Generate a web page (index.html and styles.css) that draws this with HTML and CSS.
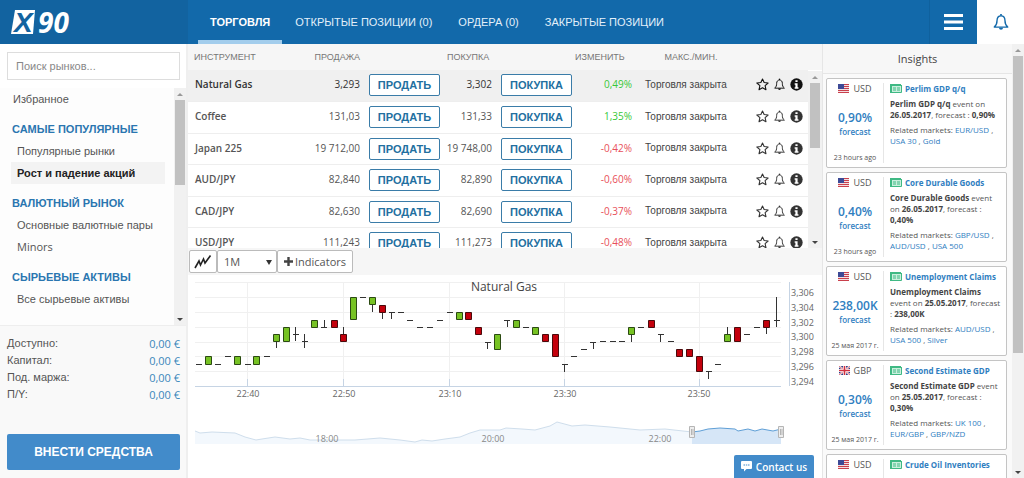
FILE: index.html
```html
<!DOCTYPE html>
<html lang="ru">
<head>
<meta charset="utf-8">
<meta name="viewport" content="width=device-width, initial-scale=1">
<title>X90</title>
<link rel="stylesheet" href="styles.css">
</head>
<body>
<svg class="defs" width="0" height="0" aria-hidden="true">
  <symbol id="star" viewBox="0 0 12 12"><path d="M6 .9l1.5 3.3 3.7.4-2.8 2.5.8 3.7L6 9l-3.2 1.8.8-3.7L.8 4.6l3.7-.4z" fill="none" stroke="currentColor" stroke-linejoin="round"/></symbol>
  <symbol id="bell" viewBox="0 0 14 16"><path d="M1 12.5c2-1.600 2.500-3.200 2.500-6C3.500 4 5 2.500 7 2.500S10.500 4 10.500 6.500c0 2.800.5 4.400 2.500 6z" fill="none" stroke="currentColor" stroke-width="1.200" stroke-linejoin="round"/><path d="M7 .8v1.700" stroke="currentColor" stroke-width="1.500"/><path d="M5.200 13h3.600a1.800 1.800 0 0 1-3.600 0z" fill="currentColor"/></symbol>
  <symbol id="info" viewBox="0 0 12 12"><circle cx="6" cy="6" r="5.700" fill="currentColor"/><path d="M5 2h2v1.700H5zM4.300 4.900H7v3.700h.8V10H4.300V8.600H5V6.200h-.7z" fill="#fff"/></symbol>
  <symbol id="us" viewBox="0 0 11 9"><path fill="#f3dfe2" d="M0 0h11v9H0z"/><path d="M0 .5h11M0 2.500h11M0 4.500h11M0 6.500h11M0 8.500h11" stroke="#c9404c"/><path fill="#3d4a96" d="M0 0h6v5H0z"/></symbol>
  <symbol id="gb" viewBox="0 0 11 9"><path fill="#2f3f86" d="M0 0h11v9H0z"/><path d="M0 0l11 9M11 0L0 9" stroke="#fff" stroke-width="2"/><path d="M0 0l11 9M11 0L0 9" stroke="#d03040" stroke-width=".7"/><path d="M5.500 0v9M0 4.500h11" stroke="#fff" stroke-width="3"/><path d="M5.500 0v9M0 4.500h11" stroke="#d03040" stroke-width="1.600"/></symbol>
  <symbol id="news" viewBox="0 0 12 9"><path fill="#3fb984" d="M0 0h11v2H2v7H0z"/><path fill="#c9efdd" d="M2 2h9v6H2z"/><path d="M2 8.500h9.500V1M3 4h3M3 6h3M7 4h3M7 6h3" stroke="#3fb984" fill="none"/></symbol>
</svg>
<div class="app">
  <header class="top">
    <a class="logo" href="#" aria-label="X90">
      <svg width="62" height="26" viewBox="0 0 62 26">
        <path d="M4 1h20l-2 24H0z" fill="#fff"/>
        <text class="logo-x" x="3" y="23">X</text>
        <text class="logo-n" x="27" y="24">90</text>
      </svg>
    </a>
    <nav class="tabs">
      <a class="tab active" href="#">ТОРГОВЛЯ</a>
      <a class="tab" href="#">ОТКРЫТЫЕ ПОЗИЦИИ (0)</a>
      <a class="tab" href="#">ОРДЕРА (0)</a>
      <a class="tab" href="#">ЗАКРЫТЫЕ ПОЗИЦИИ</a>
    </nav>
    <button class="menu" type="button" aria-label="Меню"><svg width="19" height="16" viewBox="0 0 19 16"><path d="M0 1.500h19M0 8h19M0 14.500h19" stroke="#fff" stroke-width="3"/></svg></button>
    <button class="alerts" type="button" aria-label="Уведомления"><svg width="16" height="18"><use href="#bell"/></svg></button>
  </header>
  <div class="body">
    <aside class="side">
      <input class="search" type="text" placeholder="Поиск рынков..." aria-label="Поиск рынков">
      <div class="list-wrap">
        <nav class="list">
          <a class="fav" href="#">Избранное</a>
          <h2>САМЫЕ ПОПУЛЯРНЫЕ</h2>
          <a href="#">Популярные рынки</a>
          <a class="current" href="#">Рост и падение акций</a>
          <h2>ВАЛЮТНЫЙ РЫНОК</h2>
          <a href="#">Основные валютные пары</a>
          <a class="latin" href="#">Minors</a>
          <h2>СЫРЬЕВЫЕ АКТИВЫ</h2>
          <a href="#">Все сырьевые активы</a>
        </nav>
        <div class="scroll"><i class="up"></i><i class="thumb side-thumb"></i><i class="down"></i></div>
      </div>
      <div class="account">
        <dl>
          <dt>Доступно:</dt><dd>0,00 €</dd>
          <dt>Капитал:</dt><dd>0,00 €</dd>
          <dt>Под. маржа:</dt><dd>0,00 €</dd>
          <dt>П/Y:</dt><dd>0,00 €</dd>
        </dl>
        <button class="deposit" type="button">ВНЕСТИ СРЕДСТВА</button>
      </div>
    </aside>
    <main class="main">
      <section class="quotes">
        <table>
          <colgroup><col class="c-name"><col class="c-sell"><col class="c-btn"><col class="c-buy"><col class="c-btn"><col class="c-chg"><col class="c-state"><col class="c-icons"></colgroup>
          <thead><tr><th class="left">ИНСТРУМЕНТ</th><th class="right">ПРОДАЖА</th><th></th><th class="left">ПОКУПКА</th><th></th><th class="chg-h">ИЗМЕНИТЬ</th><th class="center">МАКС./МИН.</th><th></th></tr></thead>
          <tbody>
            <tr class="sel"><td class="name">Natural Gas</td><td class="num">3,293</td><td><button class="trade" type="button">ПРОДАТЬ</button></td><td class="num">3,302</td><td><button class="trade" type="button">ПОКУПКА</button></td><td class="num up-v">0,49%</td><td class="state">Торговля закрыта</td><td><div class="icons"><svg><use href="#star"/></svg><svg><use href="#bell"/></svg><svg><use href="#info"/></svg></div></td></tr>
            <tr><td class="name">Coffee</td><td class="num">131,03</td><td><button class="trade" type="button">ПРОДАТЬ</button></td><td class="num">131,33</td><td><button class="trade" type="button">ПОКУПКА</button></td><td class="num up-v">1,35%</td><td class="state">Торговля закрыта</td><td><div class="icons"><svg><use href="#star"/></svg><svg><use href="#bell"/></svg><svg><use href="#info"/></svg></div></td></tr>
            <tr><td class="name">Japan 225</td><td class="num">19 712,00</td><td><button class="trade" type="button">ПРОДАТЬ</button></td><td class="num">19 748,00</td><td><button class="trade" type="button">ПОКУПКА</button></td><td class="num down-v">-0,42%</td><td class="state">Торговля закрыта</td><td><div class="icons"><svg><use href="#star"/></svg><svg><use href="#bell"/></svg><svg><use href="#info"/></svg></div></td></tr>
            <tr><td class="name">AUD/JPY</td><td class="num">82,840</td><td><button class="trade" type="button">ПРОДАТЬ</button></td><td class="num">82,890</td><td><button class="trade" type="button">ПОКУПКА</button></td><td class="num down-v">-0,60%</td><td class="state">Торговля закрыта</td><td><div class="icons"><svg><use href="#star"/></svg><svg><use href="#bell"/></svg><svg><use href="#info"/></svg></div></td></tr>
            <tr><td class="name">CAD/JPY</td><td class="num">82,630</td><td><button class="trade" type="button">ПРОДАТЬ</button></td><td class="num">82,690</td><td><button class="trade" type="button">ПОКУПКА</button></td><td class="num down-v">-0,37%</td><td class="state">Торговля закрыта</td><td><div class="icons"><svg><use href="#star"/></svg><svg><use href="#bell"/></svg><svg><use href="#info"/></svg></div></td></tr>
            <tr><td class="name">USD/JPY</td><td class="num">111,243</td><td><button class="trade" type="button">ПРОДАТЬ</button></td><td class="num">111,273</td><td><button class="trade" type="button">ПОКУПКА</button></td><td class="num down-v">-0,48%</td><td class="state">Торговля закрыта</td><td><div class="icons"><svg><use href="#star"/></svg><svg><use href="#bell"/></svg><svg><use href="#info"/></svg></div></td></tr>
          </tbody>
        </table>
        <div class="scroll"><i class="up"></i><i class="thumb table-thumb"></i><i class="down"></i></div>
      </section>
      <div class="toolbar">
        <button class="tool type" type="button" aria-label="Тип графика"><svg width="18" height="16" viewBox="0 0 18 16"><path d="M1 14l4-7 1.500 4 3-6 1.500 4 5.500-7.500" fill="none" stroke="#222" stroke-width="1.600"/></svg></button>
        <div class="tool period"><select aria-label="Период"><option>1M</option></select></div>
        <button class="tool" type="button"><svg width="9" height="9" viewBox="0 0 9 9"><path d="M4.500 0v9M0 4.500h9" stroke="#444" stroke-width="2.400"/></svg>Indicators</button>
      </div>
      <section class="chart">
        <svg viewBox="188 275 634 203" preserveAspectRatio="xMidYMin meet" role="img" aria-label="Natural Gas">
          <path class="grid" d="M195 282.500H781M195 297.500H781M195 312.500H781M195 327.500H781M195 342.500H781M195 356.500H781M195 371.500H781M247.500 282V386M343.500 282V386M449.500 282V386M564.500 282V386M699.500 282V386"/>
          <path class="axis" d="M195 386.500H781M789.500 282V386M247.500 379v7M343.500 379v7M449.500 379v7M564.500 379v7M699.500 379v7"/>
          <path class="wick" d="M276.500 341v7M295.500 327v14M304.500 334v14M324.500 320v7M343.500 327v7M372.500 304v8M382.500 312v7M391.500 312v7M487.500 342v7M507.500 320v7M564.500 364v8M593.500 342v7M631.500 334v8M660.500 334v8M708.500 372v7M727.500 327v7M766.500 327v7M776.500 297v30"/>
          <path class="wick" d="M196 364.500h6M215 364.500h6M225 356.500h6M245 364.500h6M264 356.500h6M293 334.500h6M302 341.500h6M321 327.500h6M360 297.500h6M389 312.500h6M398 312.500h6M407 320.500h6M417 327.500h6M427 327.500h6M437 320.500h6M447 312.500h6M485 342.500h6M504 320.500h6M523 327.500h6M562 364.500h6M571 356.500h6M581 349.500h6M590 342.500h6M600 341.500h6M610 341.500h6M619 341.500h6M638 327.500h6M658 334.500h6M668 341.500h6M706 371.500h6M715 364.500h6M744 334.500h6M754 327.500h6M774 320.500h6"/>
          <path class="rise" d="M205.500 356.500h6v8h-6zM234.500 356.500h6v8h-6zM253.500 356.500h6v8h-6zM273.500 334.500h6v7h-6zM283.500 327.500h6v14h-6zM311.500 320.500h6v7h-6zM350.500 297.500h6v22h-6zM369.500 297.500h6v7h-6zM456.500 312.500h6v7h-6zM494.500 334.500h6v15h-6zM513.500 320.500h6v7h-6zM532.500 327.500h6v7h-6zM628.500 327.500h6v7h-6zM724.500 334.500h6v7h-6z"/>
          <path class="fall" d="M331.500 320.500h6v7h-6zM340.500 334.500h6v7h-6zM379.500 305.500h6v7h-6zM465.500 312.500h6v7h-6zM475.500 327.500h6v7h-6zM542.500 334.500h6v7h-6zM552.500 334.500h6v22h-6zM648.500 320.500h6v7h-6zM676.500 349.500h6v7h-6zM686.500 349.500h6v7h-6zM696.500 356.500h6v15h-6zM734.500 327.500h6v14h-6zM763.500 320.500h6v7h-6z"/>
          <text class="title" x="504" y="291">Natural Gas</text>
          <g class="label"><text x="791" y="296">3,306</text><text x="791" y="311">3,304</text><text x="791" y="326">3,302</text><text x="791" y="340">3,300</text><text x="791" y="355">3,298</text><text x="791" y="370">3,296</text><text x="791" y="385">3,294</text></g>
          <g class="label mid"><text x="248" y="397">22:40</text><text x="344" y="397">22:50</text><text x="450" y="397">23:10</text><text x="565" y="397">23:30</text><text x="699" y="397">23:50</text></g>
          <path class="nav-area" d="M195 431L200 433 212 432 235 433 245 437 256 440 262 439 275 437 290 439 300 438 310 440 355 440 380 438 400 440 415 442 422 440 432 441 445 439 460 437 470 433 480 430 500 430 506 428 522 429 535 430 550 426 557 422 572 426 585 425 610 427 640 430 665 429 692 432V444H195z"/>
          <path class="nav-line" d="M195 431L200 433 212 432 235 433 245 437 256 440 262 439 275 437 290 439 300 438 310 440 355 440 380 438 400 440 415 442 422 440 432 441 445 439 460 437 470 433 480 430 500 430 506 428 522 429 535 430 550 426 557 422 572 426 585 425 610 427 640 430 665 429 692 432"/>
          <path class="win-area" d="M692 432L700 431 708 429 720 428 735 429 738 431 748 429 755 431 762 429 773 431 781 429V444H692z"/>
          <path class="win-line" d="M692 432L700 431 708 429 720 428 735 429 738 431 748 429 755 431 762 429 773 431 781 429"/>
          <path class="grip" d="M689.500 426.500h5v11h-5zM778.500 426.500h5v11h-5zM691.500 429v6M693 429v6M780.500 429v6M782 429v6"/>
          <g class="label mid soft"><text x="327" y="442">18:00</text><text x="493" y="442">20:00</text><text x="660" y="442">22:00</text></g>
        </svg>
        <button class="contact" type="button"><svg width="11" height="11" viewBox="0 0 11 11"><path d="M1 0h9q1 0 1 1v6q0 1-1 1H5.500L3 10.500V8H1Q0 8 0 7V1q0-1 1-1z" fill="#fff"/><path d="M2.500 4h1.500M4.800 4h1.500M7 4h1.500" stroke="#428bca" stroke-width="1.200"/></svg>Contact us</button>
      </section>
    </main>
    <aside class="insights">
      <div class="feed">
        <h2>Insights</h2>
        <article class="card"><div class="fig"><p class="cur"><svg width="11" height="9"><use href="#us"/></svg>USD</p><p class="val">0,90%</p><p class="fc">forecast</p><time>23 hours ago</time></div><div class="info"><h3><svg width="12" height="9"><use href="#news"/></svg>Perlim GDP q/q</h3><p><b>Perlim GDP q/q</b> event on <b>26.05.2017</b>, forecast : <b>0,90%</b></p><p>Related markets: <a href="#">EUR/USD</a> , <a href="#">USA 30</a> , <a href="#">Gold</a></p></div></article>
        <article class="card"><div class="fig"><p class="cur"><svg width="11" height="9"><use href="#us"/></svg>USD</p><p class="val">0,40%</p><p class="fc">forecast</p><time>23 hours ago</time></div><div class="info"><h3><svg width="12" height="9"><use href="#news"/></svg>Core Durable Goods</h3><p><b>Core Durable Goods</b> event on <b>26.05.2017</b>, forecast : <b>0,40%</b></p><p>Related markets: <a href="#">GBP/USD</a> , <a href="#">AUD/USD</a> , <a href="#">USA 500</a></p></div></article>
        <article class="card"><div class="fig"><p class="cur"><svg width="11" height="9"><use href="#us"/></svg>USD</p><p class="val">238,00K</p><p class="fc">forecast</p><time>25 мая 2017 г.</time></div><div class="info"><h3><svg width="12" height="9"><use href="#news"/></svg>Unemployment Claims</h3><p><b>Unemployment Claims</b> event on <b>25.05.2017</b>, forecast : <b>238,00K</b></p><p>Related markets: <a href="#">AUD/USD</a> , <a href="#">USA 500</a> , <a href="#">Silver</a></p></div></article>
        <article class="card"><div class="fig"><p class="cur"><svg width="11" height="9"><use href="#gb"/></svg>GBP</p><p class="val">0,30%</p><p class="fc">forecast</p><time>25 мая 2017 г.</time></div><div class="info"><h3><svg width="12" height="9"><use href="#news"/></svg>Second Estimate GDP</h3><p><b>Second Estimate GDP</b> event on <b>25.05.2017</b>, forecast : <b>0,30%</b></p><p>Related markets: <a href="#">UK 100</a> , <a href="#">EUR/GBP</a> , <a href="#">GBP/NZD</a></p></div></article>
        <article class="card"><div class="fig"><p class="cur"><svg width="11" height="9"><use href="#us"/></svg>USD</p></div><div class="info"><h3><svg width="12" height="9"><use href="#news"/></svg>Crude Oil Inventories</h3></div></article>
      </div>
      <div class="scroll"><i class="up"></i><i class="thumb feed-thumb"></i><i class="down"></i></div>
    </aside>
  </div>
</div>
</body>
</html>
```
FILE: styles.css
```css
* { box-sizing: border-box; }
body, h2, h3, p, dl, dd { margin: 0; }
body { font: 11px "Liberation Sans", sans-serif; color: #555; background: #fff; }
a { color: inherit; text-decoration: none; }
button { font: inherit; margin: 0; padding: 0; cursor: pointer; }
.defs { position: absolute; }
.app { display: flex; flex-direction: column; height: 100vh; overflow: hidden; }

.top { display: flex; flex: none; height: 44px; background: #1269aa; color: #e4f0fa; }
.logo { display: flex; align-items: center; width: 188px; padding-left: 11px; background: #1263a0; }
.logo svg { overflow: visible; }
.logo-x { font: italic bold 28px "Liberation Sans", sans-serif; fill: #1263a0; }
.logo-n { font: italic bold 28px "Open Sans", sans-serif; fill: #fff; }
.tabs { display: flex; flex: 1; padding-left: 10px; }
.tab { display: flex; align-items: center; padding: 4px 13px 0; border-bottom: 4px solid transparent; white-space: nowrap; }
.tab.active { padding: 4px 12px 0; font-weight: bold; color: #fff; border-color: #a3cdec; }
.menu, .alerts { display: flex; align-items: center; justify-content: center; border: 0; background: none; }
.menu { width: 48px; border-left: 1px solid #0f619e; }
.alerts { width: 47px; background: #fff; color: #1269aa; }

.body { display: flex; flex: 1; min-height: 0; }
.scroll { display: flex; flex-direction: column; align-items: center; flex: none; width: 12px; background: #f1f1f1; }
.up, .down { border: 3px solid transparent; }
.up { margin: 2px 0 4px; border-bottom-color: #999; }
.down { margin: auto 0 1px; border-top-color: #444; }
.thumb { width: 10px; background: #c1c1c1; }
.side-thumb { height: 85px; }
.table-thumb { height: 65px; }
.feed-thumb { height: 297px; }

.side { display: flex; flex-direction: column; flex: none; width: 188px; border-right: 2px solid #efefef; }
.search { margin: 8px 6px 8px 7px; height: 28px; padding: 0 8px; border: 1px solid #ddd; font: inherit; color: #777; }
.search::placeholder { color: #888; opacity: 1; }
.list-wrap { display: flex; flex: 1; min-height: 0; background: #fdfdfd; border-bottom: 1px solid #eee; }
.list { flex: 1; padding-left: 11px; overflow: hidden; }
.list a, .list h2 { display: block; height: 22px; line-height: 22px; white-space: nowrap; }
.list a { margin-right: 9px; padding-left: 6px; }
.list .fav { padding-left: 2px; }
.list h2 { margin-top: 8px; padding-left: 1px; font-size: 11px; font-weight: bold; color: #2a76b0; }
.list .current { background: #f3f3f3; font-weight: bold; color: #222; }
.latin { font-family: "Open Sans", sans-serif; }
.account { padding: 9px 6px 8px 7px; background: #f9f9f9; }
dl { display: grid; grid-template-columns: 1fr auto; line-height: 17px; }
dd { color: #3a87bb; font-family: "Open Sans", sans-serif; }
.deposit { display: block; width: 100%; height: 36px; margin-top: 31px; border: 0; border-radius: 2px; background: #428bca; color: #fff; font-size: 12px; font-weight: bold; }

.main { display: flex; flex-direction: column; flex: 1; min-width: 0; }
.quotes { display: flex; height: 204px; flex: none; overflow: hidden; background: linear-gradient(#f6f6f6 26px, #fff 26px); }
.quotes > .scroll { width: 14px; margin-top: 27px; }
table { flex: 1; width: 100%; table-layout: fixed; border-collapse: collapse; }
.c-name { width: 92px; } .c-sell { width: 80px; } .c-btn { width: 81px; } .c-buy { width: 51px; }
.c-chg { width: 59px; } .c-state { width: 118px; } .c-icons { width: 58px; }
th, td { padding: 0; white-space: nowrap; }
th { height: 26px; font-size: 9px; font-weight: normal; color: #777; }
.left { padding-left: 6px; text-align: left; }
.right { text-align: right; }
.chg-h { padding-left: 2px; text-align: left; }
.center { text-align: center; }
tbody tr { height: 31px; border-bottom: 1px solid #eee; }
tbody tr:nth-child(even) { height: 32px; }
.sel { background: #f0f0f0; color: #333; }
.name, .num { padding-bottom: 2px; font-family: "Open Sans", sans-serif; font-size: 10px; }
.name { padding-left: 7px; font-weight: 600; }
.num { text-align: right; }
.up-v { color: #37c837; } .down-v { color: #e8505a; }
.state { padding: 0 0 2px 13px; font-size: 10px; color: #444; }
.trade { display: block; width: 71px; height: 22px; margin-left: 9px; border: 1px solid #3a7ca8; border-radius: 2px; background: #fff; color: #226f9f; font-size: 11px; font-weight: bold; }
.icons { display: flex; align-items: center; gap: 4px; padding: 0 0 1px 6px; color: #333; }
.icons svg { width: 13px; height: 13px; }
.sel .icons { color: #111; }

.toolbar { display: flex; align-items: center; flex: none; height: 27px; padding-left: 1px; background: #f6f6f6; font: 11px "Open Sans", sans-serif; }
.tool { display: flex; align-items: center; gap: 2px; height: 23px; padding: 0 6px; border: 1px solid #bbb; border-radius: 2px; background: #fff; color: #555; }
.type { padding: 0 4px; }
.period { position: relative; width: 60px; }
.period select { width: 100%; border: 0; background: none; appearance: none; font: inherit; color: inherit; }
.period::after { content: ""; position: absolute; right: 4px; top: 9px; border: 3px solid transparent; border-top: 5px solid #333; pointer-events: none; }

.chart { position: relative; flex: 1; min-height: 0; }
.chart > svg { display: block; width: 100%; height: 100%; }
.grid { stroke: #f0f0f0; }
.axis { stroke: #c6d4e4; fill: none; }
.wick { stroke: #333; }
.rise { fill: #77c324; stroke: #2b4a12; }
.fall { fill: #c4000c; stroke: #4a0a0c; }
.title { font: 12px "Open Sans", sans-serif; fill: #444; text-anchor: middle; }
.label { font: 9px "Open Sans", sans-serif; fill: #666; }
.mid { text-anchor: middle; }
.soft { fill: #888; }
.nav-area { fill: #f3f8fd; }
.nav-line { fill: none; stroke: #cfdeec; }
.win-area { fill: #d6e6f7; }
.win-line { fill: none; stroke: #5f9fd6; }
.grip { fill: #eee; stroke: #b5b5b5; }
.contact { position: absolute; right: 8px; bottom: 0; display: flex; align-items: center; justify-content: center; gap: 4px; width: 80px; height: 23px; border: 0; border-radius: 2px 2px 0 0; background: #428bca; color: #fff; font: 600 10px "Open Sans", sans-serif; }

.insights { display: flex; flex: none; width: 202px; background: #fafafa; font-family: "Open Sans", sans-serif; }
.feed { display: flex; flex-direction: column; gap: 4px; flex: 1; overflow: hidden; padding-right: 5px; border-left: 1px solid #e6e6e6; }
.feed h2 { flex: none; height: 30px; margin: 0 -5px 0 0; border-bottom: 1px solid #e6e6e6; background: #f7f7f7; font-size: 11px; line-height: 30px; font-weight: normal; text-align: center; color: #444; }
.card { display: flex; flex: none; min-height: 90px; margin-left: 3px; padding: 4px 0; border: 1px solid #c4c4c4; border-radius: 2px; background: #fff; font-size: 8px; line-height: 11px; }
.fig { display: flex; flex-direction: column; align-items: center; flex: none; width: 57px; border-right: 1px solid #e6e6e6; }
.cur { display: flex; align-items: center; gap: 4px; font-size: 9px; }
.val { margin-top: 15px; font-size: 12px; line-height: 18px; font-weight: 600; color: #2f7ebf; }
.fc { margin-top: -1px; font-weight: 600; color: #2f7ebf; }
time { margin-top: auto; font-size: 7px; }
.info { flex: 1; padding: 0 4px 0 6px; }
.info h3 { display: flex; align-items: center; gap: 3px; font-size: 8px; font-weight: bold; color: #2f7ebf; white-space: nowrap; }
.info p { margin-top: 4px; }
.info b { font-weight: bold; color: #444; }
.info a { color: #2f7ebf; }
```
